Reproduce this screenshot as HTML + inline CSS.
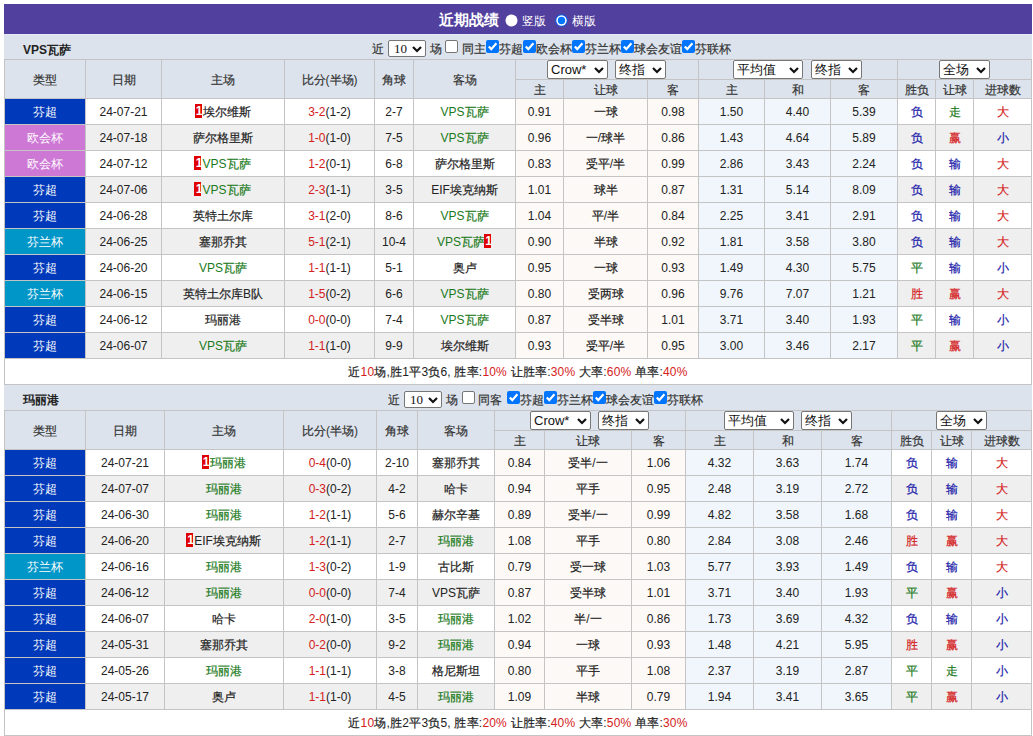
<!DOCTYPE html><html><head><meta charset="utf-8"><style>
html,body{margin:0;padding:0;background:#fff;}
body{width:1033px;height:736px;position:relative;overflow:hidden;font-family:"Liberation Sans",sans-serif;font-size:12px;color:#222;}
div{position:absolute;box-sizing:border-box;}
.t{text-align:center;white-space:nowrap;overflow:visible;}
.c{-webkit-text-stroke:0.2px currentColor}
.g{color:#1b7a1b}
.r{color:#d42020}
b1{color:#1818a8}
g1{color:#1b7a1b}
r1{color:#d42020}
.one{display:inline-block;position:relative;background:#e00000;color:#fff;font-weight:bold;width:7px;height:14px;line-height:14px;vertical-align:top;font-size:12px;margin-top:4px;margin-left:-1px;margin-right:1px}
.one i{font-style:normal;position:absolute;left:-2px;width:13px;text-align:center;top:0}
.sel{background:#fff;border:1px solid #767676;border-radius:2px;color:#111;font-size:13px;padding-left:3px;text-align:left;white-space:nowrap}
.sel.serif{font-family:"Liberation Serif",serif;font-size:13px;padding-left:5px}
.chev{position:absolute;right:3px;top:50%;margin-top:-3px}
.cb{width:13px;height:13px;border:1px solid #767676;border-radius:2px;background:#fff}
.cb.on{background:#0075ff;border:none}
.cb svg{position:absolute;left:0;top:0}
.radio{width:12px;height:12px;border-radius:50%;background:#fff}
.radio.on{border:2px solid #0075ff;background:#fff}
.radio.on div{left:2px;top:2px;width:5px;height:5px;border-radius:50%;background:#0075ff}
</style></head><body><div style="left:4px;top:4px;width:1028px;height:30px;background:#52409e;"></div>
<div style="left:4px;top:34px;width:1028px;height:1px;background:#e6e8fc;"></div>
<div class="t" style="left:439px;top:5px;width:70px;height:30px;line-height:30px;text-align:left;color:#fff;font-weight:bold;font-size:15px">近期战绩</div>
<svg style="position:absolute;left:505px;top:14px" width="13" height="13" viewBox="0 0 13 13"><circle cx="6.5" cy="6.5" r="6" fill="#fff"/></svg>
<div class="t" style="left:522px;top:6px;width:40px;height:30px;line-height:30px;text-align:left;color:#fff">竖版</div>
<svg style="position:absolute;left:555px;top:14px" width="13" height="13" viewBox="0 0 13 13"><circle cx="6.5" cy="6.5" r="6.2" fill="#0a5ae8"/><circle cx="6.5" cy="6.5" r="5.2" fill="#fff"/><circle cx="6.5" cy="6.5" r="3.7" fill="#0075ff"/></svg>
<div class="t" style="left:572px;top:6px;width:40px;height:30px;line-height:30px;text-align:left;color:#fff">横版</div>
<div style="left:4px;top:35px;width:1028px;height:25px;background:#dce3ec;"></div>
<div class="t" style="left:23px;top:38px;width:200px;height:25px;line-height:25px;text-align:left;font-weight:bold;color:#222">VPS瓦萨</div>
<div class="t" style="left:372px;top:37px;width:200px;height:25px;line-height:25px;text-align:left;color:#333"><span class="c">近</span></div>
<div class="sel serif" style="left:388px;top:40px;width:38px;height:17px;line-height:15px;">10<svg class="chev" width="10" height="7" viewBox="0 0 10 7"><path d="M1 1 L5 5 L9 1" fill="none" stroke="#111" stroke-width="2.2"/></svg></div>
<div class="t" style="left:430px;top:37px;width:200px;height:25px;line-height:25px;text-align:left;color:#333"><span class="c">场</span></div>
<div class="cb" style="left:445px;top:40px;"></div>
<div class="t" style="left:462px;top:37px;width:200px;height:25px;line-height:25px;text-align:left;color:#333"><span class="c">同主</span></div>
<div class="cb on" style="left:486px;top:40px;"><svg width="13" height="13" viewBox="0 0 13 13"><path d="M2.8 6.4 L5.3 9.1 L10.4 3.2" fill="none" stroke="#fff" stroke-width="2.2"/></svg></div>
<div class="t" style="left:499px;top:37px;width:200px;height:25px;line-height:25px;text-align:left;color:#333"><span class="c">芬超</span></div>
<div class="cb on" style="left:523px;top:40px;"><svg width="13" height="13" viewBox="0 0 13 13"><path d="M2.8 6.4 L5.3 9.1 L10.4 3.2" fill="none" stroke="#fff" stroke-width="2.2"/></svg></div>
<div class="t" style="left:536px;top:37px;width:200px;height:25px;line-height:25px;text-align:left;color:#333"><span class="c">欧会杯</span></div>
<div class="cb on" style="left:572px;top:40px;"><svg width="13" height="13" viewBox="0 0 13 13"><path d="M2.8 6.4 L5.3 9.1 L10.4 3.2" fill="none" stroke="#fff" stroke-width="2.2"/></svg></div>
<div class="t" style="left:585px;top:37px;width:200px;height:25px;line-height:25px;text-align:left;color:#333"><span class="c">芬兰杯</span></div>
<div class="cb on" style="left:621px;top:40px;"><svg width="13" height="13" viewBox="0 0 13 13"><path d="M2.8 6.4 L5.3 9.1 L10.4 3.2" fill="none" stroke="#fff" stroke-width="2.2"/></svg></div>
<div class="t" style="left:634px;top:37px;width:200px;height:25px;line-height:25px;text-align:left;color:#333"><span class="c">球会友谊</span></div>
<div class="cb on" style="left:682px;top:40px;"><svg width="13" height="13" viewBox="0 0 13 13"><path d="M2.8 6.4 L5.3 9.1 L10.4 3.2" fill="none" stroke="#fff" stroke-width="2.2"/></svg></div>
<div class="t" style="left:695px;top:37px;width:200px;height:25px;line-height:25px;text-align:left;color:#333"><span class="c">芬联杯</span></div>
<div style="left:4px;top:59px;width:1028px;height:39px;background:#dce3ec;"></div>
<div style="left:4px;top:99px;width:1028px;height:25px;background:#ffffff;"></div>
<div style="left:515px;top:99px;width:183px;height:25px;background:#fdf9f6;"></div>
<div style="left:698px;top:99px;width:199px;height:25px;background:#f0f6fb;"></div>
<div style="left:4px;top:99px;width:81px;height:25px;background:#0039ba;"></div>
<div style="left:4px;top:125px;width:1028px;height:25px;background:#efefef;"></div>
<div style="left:515px;top:125px;width:183px;height:25px;background:#fdf9f6;"></div>
<div style="left:698px;top:125px;width:199px;height:25px;background:#f0f6fb;"></div>
<div style="left:4px;top:125px;width:81px;height:25px;background:#ce78d6;"></div>
<div style="left:4px;top:151px;width:1028px;height:25px;background:#ffffff;"></div>
<div style="left:515px;top:151px;width:183px;height:25px;background:#fdf9f6;"></div>
<div style="left:698px;top:151px;width:199px;height:25px;background:#f0f6fb;"></div>
<div style="left:4px;top:151px;width:81px;height:25px;background:#ce78d6;"></div>
<div style="left:4px;top:177px;width:1028px;height:25px;background:#efefef;"></div>
<div style="left:515px;top:177px;width:183px;height:25px;background:#fdf9f6;"></div>
<div style="left:698px;top:177px;width:199px;height:25px;background:#f0f6fb;"></div>
<div style="left:4px;top:177px;width:81px;height:25px;background:#0039ba;"></div>
<div style="left:4px;top:203px;width:1028px;height:25px;background:#ffffff;"></div>
<div style="left:515px;top:203px;width:183px;height:25px;background:#fdf9f6;"></div>
<div style="left:698px;top:203px;width:199px;height:25px;background:#f0f6fb;"></div>
<div style="left:4px;top:203px;width:81px;height:25px;background:#0039ba;"></div>
<div style="left:4px;top:229px;width:1028px;height:25px;background:#efefef;"></div>
<div style="left:515px;top:229px;width:183px;height:25px;background:#fdf9f6;"></div>
<div style="left:698px;top:229px;width:199px;height:25px;background:#f0f6fb;"></div>
<div style="left:4px;top:229px;width:81px;height:25px;background:#0096c8;"></div>
<div style="left:4px;top:255px;width:1028px;height:25px;background:#ffffff;"></div>
<div style="left:515px;top:255px;width:183px;height:25px;background:#fdf9f6;"></div>
<div style="left:698px;top:255px;width:199px;height:25px;background:#f0f6fb;"></div>
<div style="left:4px;top:255px;width:81px;height:25px;background:#0039ba;"></div>
<div style="left:4px;top:281px;width:1028px;height:25px;background:#efefef;"></div>
<div style="left:515px;top:281px;width:183px;height:25px;background:#fdf9f6;"></div>
<div style="left:698px;top:281px;width:199px;height:25px;background:#f0f6fb;"></div>
<div style="left:4px;top:281px;width:81px;height:25px;background:#0096c8;"></div>
<div style="left:4px;top:307px;width:1028px;height:25px;background:#ffffff;"></div>
<div style="left:515px;top:307px;width:183px;height:25px;background:#fdf9f6;"></div>
<div style="left:698px;top:307px;width:199px;height:25px;background:#f0f6fb;"></div>
<div style="left:4px;top:307px;width:81px;height:25px;background:#0039ba;"></div>
<div style="left:4px;top:333px;width:1028px;height:25px;background:#efefef;"></div>
<div style="left:515px;top:333px;width:183px;height:25px;background:#fdf9f6;"></div>
<div style="left:698px;top:333px;width:199px;height:25px;background:#f0f6fb;"></div>
<div style="left:4px;top:333px;width:81px;height:25px;background:#0039ba;"></div>
<div style="left:4px;top:359px;width:1028px;height:25px;background:#ffffff;"></div>
<div style="left:4px;top:59px;width:1028px;height:1px;background:#c4c4c4;"></div>
<div style="left:515px;top:79px;width:516px;height:1px;background:#c4c4c4;"></div>
<div style="left:4px;top:98px;width:1028px;height:1px;background:#c4c4c4;"></div>
<div style="left:4px;top:124px;width:1028px;height:1px;background:#c4c4c4;"></div>
<div style="left:4px;top:150px;width:1028px;height:1px;background:#c4c4c4;"></div>
<div style="left:4px;top:176px;width:1028px;height:1px;background:#c4c4c4;"></div>
<div style="left:4px;top:202px;width:1028px;height:1px;background:#c4c4c4;"></div>
<div style="left:4px;top:228px;width:1028px;height:1px;background:#c4c4c4;"></div>
<div style="left:4px;top:254px;width:1028px;height:1px;background:#c4c4c4;"></div>
<div style="left:4px;top:280px;width:1028px;height:1px;background:#c4c4c4;"></div>
<div style="left:4px;top:306px;width:1028px;height:1px;background:#c4c4c4;"></div>
<div style="left:4px;top:332px;width:1028px;height:1px;background:#c4c4c4;"></div>
<div style="left:4px;top:358px;width:1028px;height:1px;background:#c4c4c4;"></div>
<div style="left:4px;top:384px;width:1028px;height:1px;background:#c4c4c4;"></div>
<div style="left:4px;top:59px;width:1px;height:326px;background:#c4c4c4;"></div>
<div style="left:85px;top:59px;width:1px;height:299px;background:#c4c4c4;"></div>
<div style="left:161px;top:59px;width:1px;height:299px;background:#c4c4c4;"></div>
<div style="left:284px;top:59px;width:1px;height:299px;background:#c4c4c4;"></div>
<div style="left:374px;top:59px;width:1px;height:299px;background:#c4c4c4;"></div>
<div style="left:413px;top:59px;width:1px;height:299px;background:#c4c4c4;"></div>
<div style="left:515px;top:59px;width:1px;height:299px;background:#c4c4c4;"></div>
<div style="left:563px;top:79px;width:1px;height:279px;background:#c4c4c4;"></div>
<div style="left:647px;top:79px;width:1px;height:279px;background:#c4c4c4;"></div>
<div style="left:698px;top:59px;width:1px;height:299px;background:#c4c4c4;"></div>
<div style="left:764px;top:79px;width:1px;height:279px;background:#c4c4c4;"></div>
<div style="left:830px;top:79px;width:1px;height:279px;background:#c4c4c4;"></div>
<div style="left:897px;top:59px;width:1px;height:299px;background:#c4c4c4;"></div>
<div style="left:935px;top:79px;width:1px;height:279px;background:#c4c4c4;"></div>
<div style="left:973px;top:79px;width:1px;height:279px;background:#c4c4c4;"></div>
<div style="left:1031px;top:59px;width:1px;height:326px;background:#c4c4c4;"></div>
<div class="t" style="left:5px;top:61px;width:80px;height:38px;line-height:38px;color:#333"><span class="c">类型</span></div>
<div class="t" style="left:86px;top:61px;width:75px;height:38px;line-height:38px;color:#333"><span class="c">日期</span></div>
<div class="t" style="left:162px;top:61px;width:122px;height:38px;line-height:38px;color:#333"><span class="c">主场</span></div>
<div class="t" style="left:285px;top:61px;width:89px;height:38px;line-height:38px;color:#333"><span class="c">比分</span>(<span class="c">半场</span>)</div>
<div class="t" style="left:375px;top:61px;width:38px;height:38px;line-height:38px;color:#333"><span class="c">角球</span></div>
<div class="t" style="left:414px;top:61px;width:101px;height:38px;line-height:38px;color:#333"><span class="c">客场</span></div>
<div class="t" style="left:516px;top:81px;width:47px;height:18px;line-height:18px;color:#333"><span class="c">主</span></div>
<div class="t" style="left:564px;top:81px;width:83px;height:18px;line-height:18px;color:#333"><span class="c">让球</span></div>
<div class="t" style="left:648px;top:81px;width:50px;height:18px;line-height:18px;color:#333"><span class="c">客</span></div>
<div class="t" style="left:699px;top:81px;width:65px;height:18px;line-height:18px;color:#333"><span class="c">主</span></div>
<div class="t" style="left:765px;top:81px;width:65px;height:18px;line-height:18px;color:#333"><span class="c">和</span></div>
<div class="t" style="left:831px;top:81px;width:66px;height:18px;line-height:18px;color:#333"><span class="c">客</span></div>
<div class="t" style="left:898px;top:81px;width:37px;height:18px;line-height:18px;color:#333"><span class="c">胜负</span></div>
<div class="t" style="left:936px;top:81px;width:37px;height:18px;line-height:18px;color:#333"><span class="c">让球</span></div>
<div class="t" style="left:974px;top:81px;width:57px;height:18px;line-height:18px;color:#333"><span class="c">进球数</span></div>
<div class="sel" style="left:547px;top:60px;width:61px;height:19px;line-height:17px;">Crow*<svg class="chev" width="10" height="7" viewBox="0 0 10 7"><path d="M1 1 L5 5 L9 1" fill="none" stroke="#111" stroke-width="2.2"/></svg></div>
<div class="sel" style="left:615px;top:60px;width:51px;height:19px;line-height:17px;">终指<svg class="chev" width="10" height="7" viewBox="0 0 10 7"><path d="M1 1 L5 5 L9 1" fill="none" stroke="#111" stroke-width="2.2"/></svg></div>
<div class="sel" style="left:733px;top:60px;width:70px;height:19px;line-height:17px;">平均值<svg class="chev" width="10" height="7" viewBox="0 0 10 7"><path d="M1 1 L5 5 L9 1" fill="none" stroke="#111" stroke-width="2.2"/></svg></div>
<div class="sel" style="left:811px;top:60px;width:51px;height:19px;line-height:17px;">终指<svg class="chev" width="10" height="7" viewBox="0 0 10 7"><path d="M1 1 L5 5 L9 1" fill="none" stroke="#111" stroke-width="2.2"/></svg></div>
<div class="sel" style="left:939px;top:60px;width:51px;height:19px;line-height:17px;">全场<svg class="chev" width="10" height="7" viewBox="0 0 10 7"><path d="M1 1 L5 5 L9 1" fill="none" stroke="#111" stroke-width="2.2"/></svg></div>
<div class="t" style="left:5px;top:100px;width:80px;height:25px;line-height:25px;color:#fff">芬超</div>
<div class="t" style="left:86px;top:100px;width:75px;height:25px;line-height:25px;">24-07-21</div>
<div class="t" style="left:162px;top:100px;width:122px;height:25px;line-height:25px;"><span class="one"><i>1</i></span><span class="c">埃尔维斯</span></div>
<div class="t" style="left:285px;top:100px;width:89px;height:25px;line-height:25px;"><span class="r">3-2</span>(1-2)</div>
<div class="t" style="left:375px;top:100px;width:38px;height:25px;line-height:25px;">2-7</div>
<div class="t" style="left:414px;top:100px;width:101px;height:25px;line-height:25px;"><span class="g">VPS<span class="c">瓦萨</span></span></div>
<div class="t" style="left:516px;top:100px;width:47px;height:25px;line-height:25px;">0.91</div>
<div class="t" style="left:564px;top:100px;width:83px;height:25px;line-height:25px;"><span class="c">一球</span></div>
<div class="t" style="left:648px;top:100px;width:50px;height:25px;line-height:25px;">0.98</div>
<div class="t" style="left:699px;top:100px;width:65px;height:25px;line-height:25px;">1.50</div>
<div class="t" style="left:765px;top:100px;width:65px;height:25px;line-height:25px;">4.40</div>
<div class="t" style="left:831px;top:100px;width:66px;height:25px;line-height:25px;">5.39</div>
<div class="t" style="left:898px;top:100px;width:37px;height:25px;line-height:25px;"><b1><span class="c">负</span></b1></div>
<div class="t" style="left:936px;top:100px;width:37px;height:25px;line-height:25px;"><g1><span class="c">走</span></g1></div>
<div class="t" style="left:974px;top:100px;width:57px;height:25px;line-height:25px;"><r1><span class="c">大</span></r1></div>
<div class="t" style="left:5px;top:126px;width:80px;height:25px;line-height:25px;color:#fff">欧会杯</div>
<div class="t" style="left:86px;top:126px;width:75px;height:25px;line-height:25px;">24-07-18</div>
<div class="t" style="left:162px;top:126px;width:122px;height:25px;line-height:25px;"><span class="c">萨尔格里斯</span></div>
<div class="t" style="left:285px;top:126px;width:89px;height:25px;line-height:25px;"><span class="r">1-0</span>(1-0)</div>
<div class="t" style="left:375px;top:126px;width:38px;height:25px;line-height:25px;">7-5</div>
<div class="t" style="left:414px;top:126px;width:101px;height:25px;line-height:25px;"><span class="g">VPS<span class="c">瓦萨</span></span></div>
<div class="t" style="left:516px;top:126px;width:47px;height:25px;line-height:25px;">0.96</div>
<div class="t" style="left:564px;top:126px;width:83px;height:25px;line-height:25px;"><span class="c">一</span>/<span class="c">球半</span></div>
<div class="t" style="left:648px;top:126px;width:50px;height:25px;line-height:25px;">0.86</div>
<div class="t" style="left:699px;top:126px;width:65px;height:25px;line-height:25px;">1.43</div>
<div class="t" style="left:765px;top:126px;width:65px;height:25px;line-height:25px;">4.64</div>
<div class="t" style="left:831px;top:126px;width:66px;height:25px;line-height:25px;">5.89</div>
<div class="t" style="left:898px;top:126px;width:37px;height:25px;line-height:25px;"><b1><span class="c">负</span></b1></div>
<div class="t" style="left:936px;top:126px;width:37px;height:25px;line-height:25px;"><r1><span class="c">赢</span></r1></div>
<div class="t" style="left:974px;top:126px;width:57px;height:25px;line-height:25px;"><b1><span class="c">小</span></b1></div>
<div class="t" style="left:5px;top:152px;width:80px;height:25px;line-height:25px;color:#fff">欧会杯</div>
<div class="t" style="left:86px;top:152px;width:75px;height:25px;line-height:25px;">24-07-12</div>
<div class="t" style="left:162px;top:152px;width:122px;height:25px;line-height:25px;"><span class="one"><i>1</i></span><span class="g">VPS<span class="c">瓦萨</span></span></div>
<div class="t" style="left:285px;top:152px;width:89px;height:25px;line-height:25px;"><span class="r">1-2</span>(0-1)</div>
<div class="t" style="left:375px;top:152px;width:38px;height:25px;line-height:25px;">6-8</div>
<div class="t" style="left:414px;top:152px;width:101px;height:25px;line-height:25px;"><span class="c">萨尔格里斯</span></div>
<div class="t" style="left:516px;top:152px;width:47px;height:25px;line-height:25px;">0.83</div>
<div class="t" style="left:564px;top:152px;width:83px;height:25px;line-height:25px;"><span class="c">受平</span>/<span class="c">半</span></div>
<div class="t" style="left:648px;top:152px;width:50px;height:25px;line-height:25px;">0.99</div>
<div class="t" style="left:699px;top:152px;width:65px;height:25px;line-height:25px;">2.86</div>
<div class="t" style="left:765px;top:152px;width:65px;height:25px;line-height:25px;">3.43</div>
<div class="t" style="left:831px;top:152px;width:66px;height:25px;line-height:25px;">2.24</div>
<div class="t" style="left:898px;top:152px;width:37px;height:25px;line-height:25px;"><b1><span class="c">负</span></b1></div>
<div class="t" style="left:936px;top:152px;width:37px;height:25px;line-height:25px;"><b1><span class="c">输</span></b1></div>
<div class="t" style="left:974px;top:152px;width:57px;height:25px;line-height:25px;"><r1><span class="c">大</span></r1></div>
<div class="t" style="left:5px;top:178px;width:80px;height:25px;line-height:25px;color:#fff">芬超</div>
<div class="t" style="left:86px;top:178px;width:75px;height:25px;line-height:25px;">24-07-06</div>
<div class="t" style="left:162px;top:178px;width:122px;height:25px;line-height:25px;"><span class="one"><i>1</i></span><span class="g">VPS<span class="c">瓦萨</span></span></div>
<div class="t" style="left:285px;top:178px;width:89px;height:25px;line-height:25px;"><span class="r">2-3</span>(1-1)</div>
<div class="t" style="left:375px;top:178px;width:38px;height:25px;line-height:25px;">3-5</div>
<div class="t" style="left:414px;top:178px;width:101px;height:25px;line-height:25px;">EIF<span class="c">埃克纳斯</span></div>
<div class="t" style="left:516px;top:178px;width:47px;height:25px;line-height:25px;">1.01</div>
<div class="t" style="left:564px;top:178px;width:83px;height:25px;line-height:25px;"><span class="c">球半</span></div>
<div class="t" style="left:648px;top:178px;width:50px;height:25px;line-height:25px;">0.87</div>
<div class="t" style="left:699px;top:178px;width:65px;height:25px;line-height:25px;">1.31</div>
<div class="t" style="left:765px;top:178px;width:65px;height:25px;line-height:25px;">5.14</div>
<div class="t" style="left:831px;top:178px;width:66px;height:25px;line-height:25px;">8.09</div>
<div class="t" style="left:898px;top:178px;width:37px;height:25px;line-height:25px;"><b1><span class="c">负</span></b1></div>
<div class="t" style="left:936px;top:178px;width:37px;height:25px;line-height:25px;"><b1><span class="c">输</span></b1></div>
<div class="t" style="left:974px;top:178px;width:57px;height:25px;line-height:25px;"><r1><span class="c">大</span></r1></div>
<div class="t" style="left:5px;top:204px;width:80px;height:25px;line-height:25px;color:#fff">芬超</div>
<div class="t" style="left:86px;top:204px;width:75px;height:25px;line-height:25px;">24-06-28</div>
<div class="t" style="left:162px;top:204px;width:122px;height:25px;line-height:25px;"><span class="c">英特土尔库</span></div>
<div class="t" style="left:285px;top:204px;width:89px;height:25px;line-height:25px;"><span class="r">3-1</span>(2-0)</div>
<div class="t" style="left:375px;top:204px;width:38px;height:25px;line-height:25px;">8-6</div>
<div class="t" style="left:414px;top:204px;width:101px;height:25px;line-height:25px;"><span class="g">VPS<span class="c">瓦萨</span></span></div>
<div class="t" style="left:516px;top:204px;width:47px;height:25px;line-height:25px;">1.04</div>
<div class="t" style="left:564px;top:204px;width:83px;height:25px;line-height:25px;"><span class="c">平</span>/<span class="c">半</span></div>
<div class="t" style="left:648px;top:204px;width:50px;height:25px;line-height:25px;">0.84</div>
<div class="t" style="left:699px;top:204px;width:65px;height:25px;line-height:25px;">2.25</div>
<div class="t" style="left:765px;top:204px;width:65px;height:25px;line-height:25px;">3.41</div>
<div class="t" style="left:831px;top:204px;width:66px;height:25px;line-height:25px;">2.91</div>
<div class="t" style="left:898px;top:204px;width:37px;height:25px;line-height:25px;"><b1><span class="c">负</span></b1></div>
<div class="t" style="left:936px;top:204px;width:37px;height:25px;line-height:25px;"><b1><span class="c">输</span></b1></div>
<div class="t" style="left:974px;top:204px;width:57px;height:25px;line-height:25px;"><r1><span class="c">大</span></r1></div>
<div class="t" style="left:5px;top:230px;width:80px;height:25px;line-height:25px;color:#fff">芬兰杯</div>
<div class="t" style="left:86px;top:230px;width:75px;height:25px;line-height:25px;">24-06-25</div>
<div class="t" style="left:162px;top:230px;width:122px;height:25px;line-height:25px;"><span class="c">塞那乔其</span></div>
<div class="t" style="left:285px;top:230px;width:89px;height:25px;line-height:25px;"><span class="r">5-1</span>(2-1)</div>
<div class="t" style="left:375px;top:230px;width:38px;height:25px;line-height:25px;">10-4</div>
<div class="t" style="left:414px;top:230px;width:101px;height:25px;line-height:25px;"><span class="g">VPS<span class="c">瓦萨</span></span><span class="one"><i>1</i></span></div>
<div class="t" style="left:516px;top:230px;width:47px;height:25px;line-height:25px;">0.90</div>
<div class="t" style="left:564px;top:230px;width:83px;height:25px;line-height:25px;"><span class="c">半球</span></div>
<div class="t" style="left:648px;top:230px;width:50px;height:25px;line-height:25px;">0.92</div>
<div class="t" style="left:699px;top:230px;width:65px;height:25px;line-height:25px;">1.81</div>
<div class="t" style="left:765px;top:230px;width:65px;height:25px;line-height:25px;">3.58</div>
<div class="t" style="left:831px;top:230px;width:66px;height:25px;line-height:25px;">3.80</div>
<div class="t" style="left:898px;top:230px;width:37px;height:25px;line-height:25px;"><b1><span class="c">负</span></b1></div>
<div class="t" style="left:936px;top:230px;width:37px;height:25px;line-height:25px;"><b1><span class="c">输</span></b1></div>
<div class="t" style="left:974px;top:230px;width:57px;height:25px;line-height:25px;"><r1><span class="c">大</span></r1></div>
<div class="t" style="left:5px;top:256px;width:80px;height:25px;line-height:25px;color:#fff">芬超</div>
<div class="t" style="left:86px;top:256px;width:75px;height:25px;line-height:25px;">24-06-20</div>
<div class="t" style="left:162px;top:256px;width:122px;height:25px;line-height:25px;"><span class="g">VPS<span class="c">瓦萨</span></span></div>
<div class="t" style="left:285px;top:256px;width:89px;height:25px;line-height:25px;"><span class="r">1-1</span>(1-1)</div>
<div class="t" style="left:375px;top:256px;width:38px;height:25px;line-height:25px;">5-1</div>
<div class="t" style="left:414px;top:256px;width:101px;height:25px;line-height:25px;"><span class="c">奥卢</span></div>
<div class="t" style="left:516px;top:256px;width:47px;height:25px;line-height:25px;">0.95</div>
<div class="t" style="left:564px;top:256px;width:83px;height:25px;line-height:25px;"><span class="c">一球</span></div>
<div class="t" style="left:648px;top:256px;width:50px;height:25px;line-height:25px;">0.93</div>
<div class="t" style="left:699px;top:256px;width:65px;height:25px;line-height:25px;">1.49</div>
<div class="t" style="left:765px;top:256px;width:65px;height:25px;line-height:25px;">4.30</div>
<div class="t" style="left:831px;top:256px;width:66px;height:25px;line-height:25px;">5.75</div>
<div class="t" style="left:898px;top:256px;width:37px;height:25px;line-height:25px;"><g1><span class="c">平</span></g1></div>
<div class="t" style="left:936px;top:256px;width:37px;height:25px;line-height:25px;"><b1><span class="c">输</span></b1></div>
<div class="t" style="left:974px;top:256px;width:57px;height:25px;line-height:25px;"><b1><span class="c">小</span></b1></div>
<div class="t" style="left:5px;top:282px;width:80px;height:25px;line-height:25px;color:#fff">芬兰杯</div>
<div class="t" style="left:86px;top:282px;width:75px;height:25px;line-height:25px;">24-06-15</div>
<div class="t" style="left:162px;top:282px;width:122px;height:25px;line-height:25px;"><span class="c">英特土尔库</span>B<span class="c">队</span></div>
<div class="t" style="left:285px;top:282px;width:89px;height:25px;line-height:25px;"><span class="r">1-5</span>(0-2)</div>
<div class="t" style="left:375px;top:282px;width:38px;height:25px;line-height:25px;">6-6</div>
<div class="t" style="left:414px;top:282px;width:101px;height:25px;line-height:25px;"><span class="g">VPS<span class="c">瓦萨</span></span></div>
<div class="t" style="left:516px;top:282px;width:47px;height:25px;line-height:25px;">0.80</div>
<div class="t" style="left:564px;top:282px;width:83px;height:25px;line-height:25px;"><span class="c">受两球</span></div>
<div class="t" style="left:648px;top:282px;width:50px;height:25px;line-height:25px;">0.96</div>
<div class="t" style="left:699px;top:282px;width:65px;height:25px;line-height:25px;">9.76</div>
<div class="t" style="left:765px;top:282px;width:65px;height:25px;line-height:25px;">7.07</div>
<div class="t" style="left:831px;top:282px;width:66px;height:25px;line-height:25px;">1.21</div>
<div class="t" style="left:898px;top:282px;width:37px;height:25px;line-height:25px;"><r1><span class="c">胜</span></r1></div>
<div class="t" style="left:936px;top:282px;width:37px;height:25px;line-height:25px;"><r1><span class="c">赢</span></r1></div>
<div class="t" style="left:974px;top:282px;width:57px;height:25px;line-height:25px;"><r1><span class="c">大</span></r1></div>
<div class="t" style="left:5px;top:308px;width:80px;height:25px;line-height:25px;color:#fff">芬超</div>
<div class="t" style="left:86px;top:308px;width:75px;height:25px;line-height:25px;">24-06-12</div>
<div class="t" style="left:162px;top:308px;width:122px;height:25px;line-height:25px;"><span class="c">玛丽港</span></div>
<div class="t" style="left:285px;top:308px;width:89px;height:25px;line-height:25px;"><span class="r">0-0</span>(0-0)</div>
<div class="t" style="left:375px;top:308px;width:38px;height:25px;line-height:25px;">7-4</div>
<div class="t" style="left:414px;top:308px;width:101px;height:25px;line-height:25px;"><span class="g">VPS<span class="c">瓦萨</span></span></div>
<div class="t" style="left:516px;top:308px;width:47px;height:25px;line-height:25px;">0.87</div>
<div class="t" style="left:564px;top:308px;width:83px;height:25px;line-height:25px;"><span class="c">受半球</span></div>
<div class="t" style="left:648px;top:308px;width:50px;height:25px;line-height:25px;">1.01</div>
<div class="t" style="left:699px;top:308px;width:65px;height:25px;line-height:25px;">3.71</div>
<div class="t" style="left:765px;top:308px;width:65px;height:25px;line-height:25px;">3.40</div>
<div class="t" style="left:831px;top:308px;width:66px;height:25px;line-height:25px;">1.93</div>
<div class="t" style="left:898px;top:308px;width:37px;height:25px;line-height:25px;"><g1><span class="c">平</span></g1></div>
<div class="t" style="left:936px;top:308px;width:37px;height:25px;line-height:25px;"><b1><span class="c">输</span></b1></div>
<div class="t" style="left:974px;top:308px;width:57px;height:25px;line-height:25px;"><b1><span class="c">小</span></b1></div>
<div class="t" style="left:5px;top:334px;width:80px;height:25px;line-height:25px;color:#fff">芬超</div>
<div class="t" style="left:86px;top:334px;width:75px;height:25px;line-height:25px;">24-06-07</div>
<div class="t" style="left:162px;top:334px;width:122px;height:25px;line-height:25px;"><span class="g">VPS<span class="c">瓦萨</span></span></div>
<div class="t" style="left:285px;top:334px;width:89px;height:25px;line-height:25px;"><span class="r">1-1</span>(1-0)</div>
<div class="t" style="left:375px;top:334px;width:38px;height:25px;line-height:25px;">9-9</div>
<div class="t" style="left:414px;top:334px;width:101px;height:25px;line-height:25px;"><span class="c">埃尔维斯</span></div>
<div class="t" style="left:516px;top:334px;width:47px;height:25px;line-height:25px;">0.93</div>
<div class="t" style="left:564px;top:334px;width:83px;height:25px;line-height:25px;"><span class="c">受平</span>/<span class="c">半</span></div>
<div class="t" style="left:648px;top:334px;width:50px;height:25px;line-height:25px;">0.95</div>
<div class="t" style="left:699px;top:334px;width:65px;height:25px;line-height:25px;">3.00</div>
<div class="t" style="left:765px;top:334px;width:65px;height:25px;line-height:25px;">3.46</div>
<div class="t" style="left:831px;top:334px;width:66px;height:25px;line-height:25px;">2.17</div>
<div class="t" style="left:898px;top:334px;width:37px;height:25px;line-height:25px;"><g1><span class="c">平</span></g1></div>
<div class="t" style="left:936px;top:334px;width:37px;height:25px;line-height:25px;"><r1><span class="c">赢</span></r1></div>
<div class="t" style="left:974px;top:334px;width:57px;height:25px;line-height:25px;"><b1><span class="c">小</span></b1></div>
<div class="t" style="left:5px;top:360px;width:1026px;height:25px;line-height:25px;letter-spacing:0.2px"><span class="c">近</span><span class="r">10</span><span class="c">场</span>,<span class="c">胜</span>1<span class="c">平</span>3<span class="c">负</span>6, <span class="c">胜率</span>:<span class="r">10%</span> <span class="c">让胜率</span>:<span class="r">30%</span> <span class="c">大率</span>:<span class="r">60%</span> <span class="c">单率</span>:<span class="r">40%</span></div>
<div style="left:4px;top:385px;width:1028px;height:25px;background:#dce3ec;"></div>
<div class="t" style="left:23px;top:388px;width:200px;height:25px;line-height:25px;text-align:left;font-weight:bold;color:#222">玛丽港</div>
<div class="t" style="left:388px;top:388px;width:200px;height:25px;line-height:25px;text-align:left;color:#333"><span class="c">近</span></div>
<div class="sel serif" style="left:404px;top:391px;width:38px;height:17px;line-height:15px;">10<svg class="chev" width="10" height="7" viewBox="0 0 10 7"><path d="M1 1 L5 5 L9 1" fill="none" stroke="#111" stroke-width="2.2"/></svg></div>
<div class="t" style="left:446px;top:388px;width:200px;height:25px;line-height:25px;text-align:left;color:#333"><span class="c">场</span></div>
<div class="cb" style="left:462px;top:391px;"></div>
<div class="t" style="left:478px;top:388px;width:200px;height:25px;line-height:25px;text-align:left;color:#333"><span class="c">同客</span></div>
<div class="cb on" style="left:507px;top:391px;"><svg width="13" height="13" viewBox="0 0 13 13"><path d="M2.8 6.4 L5.3 9.1 L10.4 3.2" fill="none" stroke="#fff" stroke-width="2.2"/></svg></div>
<div class="t" style="left:520px;top:388px;width:200px;height:25px;line-height:25px;text-align:left;color:#333"><span class="c">芬超</span></div>
<div class="cb on" style="left:544px;top:391px;"><svg width="13" height="13" viewBox="0 0 13 13"><path d="M2.8 6.4 L5.3 9.1 L10.4 3.2" fill="none" stroke="#fff" stroke-width="2.2"/></svg></div>
<div class="t" style="left:557px;top:388px;width:200px;height:25px;line-height:25px;text-align:left;color:#333"><span class="c">芬兰杯</span></div>
<div class="cb on" style="left:593px;top:391px;"><svg width="13" height="13" viewBox="0 0 13 13"><path d="M2.8 6.4 L5.3 9.1 L10.4 3.2" fill="none" stroke="#fff" stroke-width="2.2"/></svg></div>
<div class="t" style="left:606px;top:388px;width:200px;height:25px;line-height:25px;text-align:left;color:#333"><span class="c">球会友谊</span></div>
<div class="cb on" style="left:654px;top:391px;"><svg width="13" height="13" viewBox="0 0 13 13"><path d="M2.8 6.4 L5.3 9.1 L10.4 3.2" fill="none" stroke="#fff" stroke-width="2.2"/></svg></div>
<div class="t" style="left:667px;top:388px;width:200px;height:25px;line-height:25px;text-align:left;color:#333"><span class="c">芬联杯</span></div>
<div style="left:4px;top:410px;width:1028px;height:39px;background:#dce3ec;"></div>
<div style="left:4px;top:450px;width:1028px;height:25px;background:#ffffff;"></div>
<div style="left:494px;top:450px;width:191px;height:25px;background:#fdf9f6;"></div>
<div style="left:685px;top:450px;width:206px;height:25px;background:#f0f6fb;"></div>
<div style="left:4px;top:450px;width:81px;height:25px;background:#0039ba;"></div>
<div style="left:4px;top:476px;width:1028px;height:25px;background:#efefef;"></div>
<div style="left:494px;top:476px;width:191px;height:25px;background:#fdf9f6;"></div>
<div style="left:685px;top:476px;width:206px;height:25px;background:#f0f6fb;"></div>
<div style="left:4px;top:476px;width:81px;height:25px;background:#0039ba;"></div>
<div style="left:4px;top:502px;width:1028px;height:25px;background:#ffffff;"></div>
<div style="left:494px;top:502px;width:191px;height:25px;background:#fdf9f6;"></div>
<div style="left:685px;top:502px;width:206px;height:25px;background:#f0f6fb;"></div>
<div style="left:4px;top:502px;width:81px;height:25px;background:#0039ba;"></div>
<div style="left:4px;top:528px;width:1028px;height:25px;background:#efefef;"></div>
<div style="left:494px;top:528px;width:191px;height:25px;background:#fdf9f6;"></div>
<div style="left:685px;top:528px;width:206px;height:25px;background:#f0f6fb;"></div>
<div style="left:4px;top:528px;width:81px;height:25px;background:#0039ba;"></div>
<div style="left:4px;top:554px;width:1028px;height:25px;background:#ffffff;"></div>
<div style="left:494px;top:554px;width:191px;height:25px;background:#fdf9f6;"></div>
<div style="left:685px;top:554px;width:206px;height:25px;background:#f0f6fb;"></div>
<div style="left:4px;top:554px;width:81px;height:25px;background:#0096c8;"></div>
<div style="left:4px;top:580px;width:1028px;height:25px;background:#efefef;"></div>
<div style="left:494px;top:580px;width:191px;height:25px;background:#fdf9f6;"></div>
<div style="left:685px;top:580px;width:206px;height:25px;background:#f0f6fb;"></div>
<div style="left:4px;top:580px;width:81px;height:25px;background:#0039ba;"></div>
<div style="left:4px;top:606px;width:1028px;height:25px;background:#ffffff;"></div>
<div style="left:494px;top:606px;width:191px;height:25px;background:#fdf9f6;"></div>
<div style="left:685px;top:606px;width:206px;height:25px;background:#f0f6fb;"></div>
<div style="left:4px;top:606px;width:81px;height:25px;background:#0039ba;"></div>
<div style="left:4px;top:632px;width:1028px;height:25px;background:#efefef;"></div>
<div style="left:494px;top:632px;width:191px;height:25px;background:#fdf9f6;"></div>
<div style="left:685px;top:632px;width:206px;height:25px;background:#f0f6fb;"></div>
<div style="left:4px;top:632px;width:81px;height:25px;background:#0039ba;"></div>
<div style="left:4px;top:658px;width:1028px;height:25px;background:#ffffff;"></div>
<div style="left:494px;top:658px;width:191px;height:25px;background:#fdf9f6;"></div>
<div style="left:685px;top:658px;width:206px;height:25px;background:#f0f6fb;"></div>
<div style="left:4px;top:658px;width:81px;height:25px;background:#0039ba;"></div>
<div style="left:4px;top:684px;width:1028px;height:25px;background:#efefef;"></div>
<div style="left:494px;top:684px;width:191px;height:25px;background:#fdf9f6;"></div>
<div style="left:685px;top:684px;width:206px;height:25px;background:#f0f6fb;"></div>
<div style="left:4px;top:684px;width:81px;height:25px;background:#0039ba;"></div>
<div style="left:4px;top:710px;width:1028px;height:25px;background:#ffffff;"></div>
<div style="left:4px;top:410px;width:1028px;height:1px;background:#c4c4c4;"></div>
<div style="left:494px;top:430px;width:537px;height:1px;background:#c4c4c4;"></div>
<div style="left:4px;top:449px;width:1028px;height:1px;background:#c4c4c4;"></div>
<div style="left:4px;top:475px;width:1028px;height:1px;background:#c4c4c4;"></div>
<div style="left:4px;top:501px;width:1028px;height:1px;background:#c4c4c4;"></div>
<div style="left:4px;top:527px;width:1028px;height:1px;background:#c4c4c4;"></div>
<div style="left:4px;top:553px;width:1028px;height:1px;background:#c4c4c4;"></div>
<div style="left:4px;top:579px;width:1028px;height:1px;background:#c4c4c4;"></div>
<div style="left:4px;top:605px;width:1028px;height:1px;background:#c4c4c4;"></div>
<div style="left:4px;top:631px;width:1028px;height:1px;background:#c4c4c4;"></div>
<div style="left:4px;top:657px;width:1028px;height:1px;background:#c4c4c4;"></div>
<div style="left:4px;top:683px;width:1028px;height:1px;background:#c4c4c4;"></div>
<div style="left:4px;top:709px;width:1028px;height:1px;background:#c4c4c4;"></div>
<div style="left:4px;top:735px;width:1028px;height:1px;background:#c4c4c4;"></div>
<div style="left:4px;top:410px;width:1px;height:326px;background:#c4c4c4;"></div>
<div style="left:85px;top:410px;width:1px;height:299px;background:#c4c4c4;"></div>
<div style="left:164px;top:410px;width:1px;height:299px;background:#c4c4c4;"></div>
<div style="left:283px;top:410px;width:1px;height:299px;background:#c4c4c4;"></div>
<div style="left:376px;top:410px;width:1px;height:299px;background:#c4c4c4;"></div>
<div style="left:417px;top:410px;width:1px;height:299px;background:#c4c4c4;"></div>
<div style="left:494px;top:410px;width:1px;height:299px;background:#c4c4c4;"></div>
<div style="left:544px;top:430px;width:1px;height:279px;background:#c4c4c4;"></div>
<div style="left:631px;top:430px;width:1px;height:279px;background:#c4c4c4;"></div>
<div style="left:685px;top:410px;width:1px;height:299px;background:#c4c4c4;"></div>
<div style="left:753px;top:430px;width:1px;height:279px;background:#c4c4c4;"></div>
<div style="left:821px;top:430px;width:1px;height:279px;background:#c4c4c4;"></div>
<div style="left:891px;top:410px;width:1px;height:299px;background:#c4c4c4;"></div>
<div style="left:931px;top:430px;width:1px;height:279px;background:#c4c4c4;"></div>
<div style="left:971px;top:430px;width:1px;height:279px;background:#c4c4c4;"></div>
<div style="left:1031px;top:410px;width:1px;height:326px;background:#c4c4c4;"></div>
<div class="t" style="left:5px;top:412px;width:80px;height:38px;line-height:38px;color:#333"><span class="c">类型</span></div>
<div class="t" style="left:86px;top:412px;width:78px;height:38px;line-height:38px;color:#333"><span class="c">日期</span></div>
<div class="t" style="left:165px;top:412px;width:118px;height:38px;line-height:38px;color:#333"><span class="c">主场</span></div>
<div class="t" style="left:284px;top:412px;width:92px;height:38px;line-height:38px;color:#333"><span class="c">比分</span>(<span class="c">半场</span>)</div>
<div class="t" style="left:377px;top:412px;width:40px;height:38px;line-height:38px;color:#333"><span class="c">角球</span></div>
<div class="t" style="left:418px;top:412px;width:76px;height:38px;line-height:38px;color:#333"><span class="c">客场</span></div>
<div class="t" style="left:495px;top:432px;width:49px;height:18px;line-height:18px;color:#333"><span class="c">主</span></div>
<div class="t" style="left:545px;top:432px;width:86px;height:18px;line-height:18px;color:#333"><span class="c">让球</span></div>
<div class="t" style="left:632px;top:432px;width:53px;height:18px;line-height:18px;color:#333"><span class="c">客</span></div>
<div class="t" style="left:686px;top:432px;width:67px;height:18px;line-height:18px;color:#333"><span class="c">主</span></div>
<div class="t" style="left:754px;top:432px;width:67px;height:18px;line-height:18px;color:#333"><span class="c">和</span></div>
<div class="t" style="left:822px;top:432px;width:69px;height:18px;line-height:18px;color:#333"><span class="c">客</span></div>
<div class="t" style="left:892px;top:432px;width:39px;height:18px;line-height:18px;color:#333"><span class="c">胜负</span></div>
<div class="t" style="left:932px;top:432px;width:39px;height:18px;line-height:18px;color:#333"><span class="c">让球</span></div>
<div class="t" style="left:972px;top:432px;width:59px;height:18px;line-height:18px;color:#333"><span class="c">进球数</span></div>
<div class="sel" style="left:530px;top:411px;width:61px;height:19px;line-height:17px;">Crow*<svg class="chev" width="10" height="7" viewBox="0 0 10 7"><path d="M1 1 L5 5 L9 1" fill="none" stroke="#111" stroke-width="2.2"/></svg></div>
<div class="sel" style="left:598px;top:411px;width:51px;height:19px;line-height:17px;">终指<svg class="chev" width="10" height="7" viewBox="0 0 10 7"><path d="M1 1 L5 5 L9 1" fill="none" stroke="#111" stroke-width="2.2"/></svg></div>
<div class="sel" style="left:724px;top:411px;width:70px;height:19px;line-height:17px;">平均值<svg class="chev" width="10" height="7" viewBox="0 0 10 7"><path d="M1 1 L5 5 L9 1" fill="none" stroke="#111" stroke-width="2.2"/></svg></div>
<div class="sel" style="left:801px;top:411px;width:51px;height:19px;line-height:17px;">终指<svg class="chev" width="10" height="7" viewBox="0 0 10 7"><path d="M1 1 L5 5 L9 1" fill="none" stroke="#111" stroke-width="2.2"/></svg></div>
<div class="sel" style="left:936px;top:411px;width:51px;height:19px;line-height:17px;">全场<svg class="chev" width="10" height="7" viewBox="0 0 10 7"><path d="M1 1 L5 5 L9 1" fill="none" stroke="#111" stroke-width="2.2"/></svg></div>
<div class="t" style="left:5px;top:451px;width:80px;height:25px;line-height:25px;color:#fff">芬超</div>
<div class="t" style="left:86px;top:451px;width:78px;height:25px;line-height:25px;">24-07-21</div>
<div class="t" style="left:165px;top:451px;width:118px;height:25px;line-height:25px;"><span class="one"><i>1</i></span><span class="g"><span class="c">玛丽港</span></span></div>
<div class="t" style="left:284px;top:451px;width:92px;height:25px;line-height:25px;"><span class="r">0-4</span>(0-0)</div>
<div class="t" style="left:377px;top:451px;width:40px;height:25px;line-height:25px;">2-10</div>
<div class="t" style="left:418px;top:451px;width:76px;height:25px;line-height:25px;"><span class="c">塞那乔其</span></div>
<div class="t" style="left:495px;top:451px;width:49px;height:25px;line-height:25px;">0.84</div>
<div class="t" style="left:545px;top:451px;width:86px;height:25px;line-height:25px;"><span class="c">受半</span>/<span class="c">一</span></div>
<div class="t" style="left:632px;top:451px;width:53px;height:25px;line-height:25px;">1.06</div>
<div class="t" style="left:686px;top:451px;width:67px;height:25px;line-height:25px;">4.32</div>
<div class="t" style="left:754px;top:451px;width:67px;height:25px;line-height:25px;">3.63</div>
<div class="t" style="left:822px;top:451px;width:69px;height:25px;line-height:25px;">1.74</div>
<div class="t" style="left:892px;top:451px;width:39px;height:25px;line-height:25px;"><b1><span class="c">负</span></b1></div>
<div class="t" style="left:932px;top:451px;width:39px;height:25px;line-height:25px;"><b1><span class="c">输</span></b1></div>
<div class="t" style="left:972px;top:451px;width:59px;height:25px;line-height:25px;"><r1><span class="c">大</span></r1></div>
<div class="t" style="left:5px;top:477px;width:80px;height:25px;line-height:25px;color:#fff">芬超</div>
<div class="t" style="left:86px;top:477px;width:78px;height:25px;line-height:25px;">24-07-07</div>
<div class="t" style="left:165px;top:477px;width:118px;height:25px;line-height:25px;"><span class="g"><span class="c">玛丽港</span></span></div>
<div class="t" style="left:284px;top:477px;width:92px;height:25px;line-height:25px;"><span class="r">0-3</span>(0-2)</div>
<div class="t" style="left:377px;top:477px;width:40px;height:25px;line-height:25px;">4-2</div>
<div class="t" style="left:418px;top:477px;width:76px;height:25px;line-height:25px;"><span class="c">哈卡</span></div>
<div class="t" style="left:495px;top:477px;width:49px;height:25px;line-height:25px;">0.94</div>
<div class="t" style="left:545px;top:477px;width:86px;height:25px;line-height:25px;"><span class="c">平手</span></div>
<div class="t" style="left:632px;top:477px;width:53px;height:25px;line-height:25px;">0.95</div>
<div class="t" style="left:686px;top:477px;width:67px;height:25px;line-height:25px;">2.48</div>
<div class="t" style="left:754px;top:477px;width:67px;height:25px;line-height:25px;">3.19</div>
<div class="t" style="left:822px;top:477px;width:69px;height:25px;line-height:25px;">2.72</div>
<div class="t" style="left:892px;top:477px;width:39px;height:25px;line-height:25px;"><b1><span class="c">负</span></b1></div>
<div class="t" style="left:932px;top:477px;width:39px;height:25px;line-height:25px;"><b1><span class="c">输</span></b1></div>
<div class="t" style="left:972px;top:477px;width:59px;height:25px;line-height:25px;"><r1><span class="c">大</span></r1></div>
<div class="t" style="left:5px;top:503px;width:80px;height:25px;line-height:25px;color:#fff">芬超</div>
<div class="t" style="left:86px;top:503px;width:78px;height:25px;line-height:25px;">24-06-30</div>
<div class="t" style="left:165px;top:503px;width:118px;height:25px;line-height:25px;"><span class="g"><span class="c">玛丽港</span></span></div>
<div class="t" style="left:284px;top:503px;width:92px;height:25px;line-height:25px;"><span class="r">1-2</span>(1-1)</div>
<div class="t" style="left:377px;top:503px;width:40px;height:25px;line-height:25px;">5-6</div>
<div class="t" style="left:418px;top:503px;width:76px;height:25px;line-height:25px;"><span class="c">赫尔辛基</span></div>
<div class="t" style="left:495px;top:503px;width:49px;height:25px;line-height:25px;">0.89</div>
<div class="t" style="left:545px;top:503px;width:86px;height:25px;line-height:25px;"><span class="c">受半</span>/<span class="c">一</span></div>
<div class="t" style="left:632px;top:503px;width:53px;height:25px;line-height:25px;">0.99</div>
<div class="t" style="left:686px;top:503px;width:67px;height:25px;line-height:25px;">4.82</div>
<div class="t" style="left:754px;top:503px;width:67px;height:25px;line-height:25px;">3.58</div>
<div class="t" style="left:822px;top:503px;width:69px;height:25px;line-height:25px;">1.68</div>
<div class="t" style="left:892px;top:503px;width:39px;height:25px;line-height:25px;"><b1><span class="c">负</span></b1></div>
<div class="t" style="left:932px;top:503px;width:39px;height:25px;line-height:25px;"><b1><span class="c">输</span></b1></div>
<div class="t" style="left:972px;top:503px;width:59px;height:25px;line-height:25px;"><r1><span class="c">大</span></r1></div>
<div class="t" style="left:5px;top:529px;width:80px;height:25px;line-height:25px;color:#fff">芬超</div>
<div class="t" style="left:86px;top:529px;width:78px;height:25px;line-height:25px;">24-06-20</div>
<div class="t" style="left:165px;top:529px;width:118px;height:25px;line-height:25px;"><span class="one"><i>1</i></span>EIF<span class="c">埃克纳斯</span></div>
<div class="t" style="left:284px;top:529px;width:92px;height:25px;line-height:25px;"><span class="r">1-2</span>(1-1)</div>
<div class="t" style="left:377px;top:529px;width:40px;height:25px;line-height:25px;">2-7</div>
<div class="t" style="left:418px;top:529px;width:76px;height:25px;line-height:25px;"><span class="g"><span class="c">玛丽港</span></span></div>
<div class="t" style="left:495px;top:529px;width:49px;height:25px;line-height:25px;">1.08</div>
<div class="t" style="left:545px;top:529px;width:86px;height:25px;line-height:25px;"><span class="c">平手</span></div>
<div class="t" style="left:632px;top:529px;width:53px;height:25px;line-height:25px;">0.80</div>
<div class="t" style="left:686px;top:529px;width:67px;height:25px;line-height:25px;">2.84</div>
<div class="t" style="left:754px;top:529px;width:67px;height:25px;line-height:25px;">3.08</div>
<div class="t" style="left:822px;top:529px;width:69px;height:25px;line-height:25px;">2.46</div>
<div class="t" style="left:892px;top:529px;width:39px;height:25px;line-height:25px;"><r1><span class="c">胜</span></r1></div>
<div class="t" style="left:932px;top:529px;width:39px;height:25px;line-height:25px;"><r1><span class="c">赢</span></r1></div>
<div class="t" style="left:972px;top:529px;width:59px;height:25px;line-height:25px;"><r1><span class="c">大</span></r1></div>
<div class="t" style="left:5px;top:555px;width:80px;height:25px;line-height:25px;color:#fff">芬兰杯</div>
<div class="t" style="left:86px;top:555px;width:78px;height:25px;line-height:25px;">24-06-16</div>
<div class="t" style="left:165px;top:555px;width:118px;height:25px;line-height:25px;"><span class="g"><span class="c">玛丽港</span></span></div>
<div class="t" style="left:284px;top:555px;width:92px;height:25px;line-height:25px;"><span class="r">1-3</span>(0-2)</div>
<div class="t" style="left:377px;top:555px;width:40px;height:25px;line-height:25px;">1-9</div>
<div class="t" style="left:418px;top:555px;width:76px;height:25px;line-height:25px;"><span class="c">古比斯</span></div>
<div class="t" style="left:495px;top:555px;width:49px;height:25px;line-height:25px;">0.79</div>
<div class="t" style="left:545px;top:555px;width:86px;height:25px;line-height:25px;"><span class="c">受一球</span></div>
<div class="t" style="left:632px;top:555px;width:53px;height:25px;line-height:25px;">1.03</div>
<div class="t" style="left:686px;top:555px;width:67px;height:25px;line-height:25px;">5.77</div>
<div class="t" style="left:754px;top:555px;width:67px;height:25px;line-height:25px;">3.93</div>
<div class="t" style="left:822px;top:555px;width:69px;height:25px;line-height:25px;">1.49</div>
<div class="t" style="left:892px;top:555px;width:39px;height:25px;line-height:25px;"><b1><span class="c">负</span></b1></div>
<div class="t" style="left:932px;top:555px;width:39px;height:25px;line-height:25px;"><b1><span class="c">输</span></b1></div>
<div class="t" style="left:972px;top:555px;width:59px;height:25px;line-height:25px;"><r1><span class="c">大</span></r1></div>
<div class="t" style="left:5px;top:581px;width:80px;height:25px;line-height:25px;color:#fff">芬超</div>
<div class="t" style="left:86px;top:581px;width:78px;height:25px;line-height:25px;">24-06-12</div>
<div class="t" style="left:165px;top:581px;width:118px;height:25px;line-height:25px;"><span class="g"><span class="c">玛丽港</span></span></div>
<div class="t" style="left:284px;top:581px;width:92px;height:25px;line-height:25px;"><span class="r">0-0</span>(0-0)</div>
<div class="t" style="left:377px;top:581px;width:40px;height:25px;line-height:25px;">7-4</div>
<div class="t" style="left:418px;top:581px;width:76px;height:25px;line-height:25px;">VPS<span class="c">瓦萨</span></div>
<div class="t" style="left:495px;top:581px;width:49px;height:25px;line-height:25px;">0.87</div>
<div class="t" style="left:545px;top:581px;width:86px;height:25px;line-height:25px;"><span class="c">受半球</span></div>
<div class="t" style="left:632px;top:581px;width:53px;height:25px;line-height:25px;">1.01</div>
<div class="t" style="left:686px;top:581px;width:67px;height:25px;line-height:25px;">3.71</div>
<div class="t" style="left:754px;top:581px;width:67px;height:25px;line-height:25px;">3.40</div>
<div class="t" style="left:822px;top:581px;width:69px;height:25px;line-height:25px;">1.93</div>
<div class="t" style="left:892px;top:581px;width:39px;height:25px;line-height:25px;"><g1><span class="c">平</span></g1></div>
<div class="t" style="left:932px;top:581px;width:39px;height:25px;line-height:25px;"><r1><span class="c">赢</span></r1></div>
<div class="t" style="left:972px;top:581px;width:59px;height:25px;line-height:25px;"><b1><span class="c">小</span></b1></div>
<div class="t" style="left:5px;top:607px;width:80px;height:25px;line-height:25px;color:#fff">芬超</div>
<div class="t" style="left:86px;top:607px;width:78px;height:25px;line-height:25px;">24-06-07</div>
<div class="t" style="left:165px;top:607px;width:118px;height:25px;line-height:25px;"><span class="c">哈卡</span></div>
<div class="t" style="left:284px;top:607px;width:92px;height:25px;line-height:25px;"><span class="r">2-0</span>(1-0)</div>
<div class="t" style="left:377px;top:607px;width:40px;height:25px;line-height:25px;">3-5</div>
<div class="t" style="left:418px;top:607px;width:76px;height:25px;line-height:25px;"><span class="g"><span class="c">玛丽港</span></span></div>
<div class="t" style="left:495px;top:607px;width:49px;height:25px;line-height:25px;">1.02</div>
<div class="t" style="left:545px;top:607px;width:86px;height:25px;line-height:25px;"><span class="c">半</span>/<span class="c">一</span></div>
<div class="t" style="left:632px;top:607px;width:53px;height:25px;line-height:25px;">0.86</div>
<div class="t" style="left:686px;top:607px;width:67px;height:25px;line-height:25px;">1.73</div>
<div class="t" style="left:754px;top:607px;width:67px;height:25px;line-height:25px;">3.69</div>
<div class="t" style="left:822px;top:607px;width:69px;height:25px;line-height:25px;">4.32</div>
<div class="t" style="left:892px;top:607px;width:39px;height:25px;line-height:25px;"><b1><span class="c">负</span></b1></div>
<div class="t" style="left:932px;top:607px;width:39px;height:25px;line-height:25px;"><b1><span class="c">输</span></b1></div>
<div class="t" style="left:972px;top:607px;width:59px;height:25px;line-height:25px;"><b1><span class="c">小</span></b1></div>
<div class="t" style="left:5px;top:633px;width:80px;height:25px;line-height:25px;color:#fff">芬超</div>
<div class="t" style="left:86px;top:633px;width:78px;height:25px;line-height:25px;">24-05-31</div>
<div class="t" style="left:165px;top:633px;width:118px;height:25px;line-height:25px;"><span class="c">塞那乔其</span></div>
<div class="t" style="left:284px;top:633px;width:92px;height:25px;line-height:25px;"><span class="r">0-2</span>(0-0)</div>
<div class="t" style="left:377px;top:633px;width:40px;height:25px;line-height:25px;">9-2</div>
<div class="t" style="left:418px;top:633px;width:76px;height:25px;line-height:25px;"><span class="g"><span class="c">玛丽港</span></span></div>
<div class="t" style="left:495px;top:633px;width:49px;height:25px;line-height:25px;">0.94</div>
<div class="t" style="left:545px;top:633px;width:86px;height:25px;line-height:25px;"><span class="c">一球</span></div>
<div class="t" style="left:632px;top:633px;width:53px;height:25px;line-height:25px;">0.93</div>
<div class="t" style="left:686px;top:633px;width:67px;height:25px;line-height:25px;">1.48</div>
<div class="t" style="left:754px;top:633px;width:67px;height:25px;line-height:25px;">4.21</div>
<div class="t" style="left:822px;top:633px;width:69px;height:25px;line-height:25px;">5.95</div>
<div class="t" style="left:892px;top:633px;width:39px;height:25px;line-height:25px;"><r1><span class="c">胜</span></r1></div>
<div class="t" style="left:932px;top:633px;width:39px;height:25px;line-height:25px;"><r1><span class="c">赢</span></r1></div>
<div class="t" style="left:972px;top:633px;width:59px;height:25px;line-height:25px;"><b1><span class="c">小</span></b1></div>
<div class="t" style="left:5px;top:659px;width:80px;height:25px;line-height:25px;color:#fff">芬超</div>
<div class="t" style="left:86px;top:659px;width:78px;height:25px;line-height:25px;">24-05-26</div>
<div class="t" style="left:165px;top:659px;width:118px;height:25px;line-height:25px;"><span class="g"><span class="c">玛丽港</span></span></div>
<div class="t" style="left:284px;top:659px;width:92px;height:25px;line-height:25px;"><span class="r">1-1</span>(1-1)</div>
<div class="t" style="left:377px;top:659px;width:40px;height:25px;line-height:25px;">3-8</div>
<div class="t" style="left:418px;top:659px;width:76px;height:25px;line-height:25px;"><span class="c">格尼斯坦</span></div>
<div class="t" style="left:495px;top:659px;width:49px;height:25px;line-height:25px;">0.80</div>
<div class="t" style="left:545px;top:659px;width:86px;height:25px;line-height:25px;"><span class="c">平手</span></div>
<div class="t" style="left:632px;top:659px;width:53px;height:25px;line-height:25px;">1.08</div>
<div class="t" style="left:686px;top:659px;width:67px;height:25px;line-height:25px;">2.37</div>
<div class="t" style="left:754px;top:659px;width:67px;height:25px;line-height:25px;">3.19</div>
<div class="t" style="left:822px;top:659px;width:69px;height:25px;line-height:25px;">2.87</div>
<div class="t" style="left:892px;top:659px;width:39px;height:25px;line-height:25px;"><g1><span class="c">平</span></g1></div>
<div class="t" style="left:932px;top:659px;width:39px;height:25px;line-height:25px;"><g1><span class="c">走</span></g1></div>
<div class="t" style="left:972px;top:659px;width:59px;height:25px;line-height:25px;"><b1><span class="c">小</span></b1></div>
<div class="t" style="left:5px;top:685px;width:80px;height:25px;line-height:25px;color:#fff">芬超</div>
<div class="t" style="left:86px;top:685px;width:78px;height:25px;line-height:25px;">24-05-17</div>
<div class="t" style="left:165px;top:685px;width:118px;height:25px;line-height:25px;"><span class="c">奥卢</span></div>
<div class="t" style="left:284px;top:685px;width:92px;height:25px;line-height:25px;"><span class="r">1-1</span>(1-0)</div>
<div class="t" style="left:377px;top:685px;width:40px;height:25px;line-height:25px;">4-5</div>
<div class="t" style="left:418px;top:685px;width:76px;height:25px;line-height:25px;"><span class="g"><span class="c">玛丽港</span></span></div>
<div class="t" style="left:495px;top:685px;width:49px;height:25px;line-height:25px;">1.09</div>
<div class="t" style="left:545px;top:685px;width:86px;height:25px;line-height:25px;"><span class="c">半球</span></div>
<div class="t" style="left:632px;top:685px;width:53px;height:25px;line-height:25px;">0.79</div>
<div class="t" style="left:686px;top:685px;width:67px;height:25px;line-height:25px;">1.94</div>
<div class="t" style="left:754px;top:685px;width:67px;height:25px;line-height:25px;">3.41</div>
<div class="t" style="left:822px;top:685px;width:69px;height:25px;line-height:25px;">3.65</div>
<div class="t" style="left:892px;top:685px;width:39px;height:25px;line-height:25px;"><g1><span class="c">平</span></g1></div>
<div class="t" style="left:932px;top:685px;width:39px;height:25px;line-height:25px;"><r1><span class="c">赢</span></r1></div>
<div class="t" style="left:972px;top:685px;width:59px;height:25px;line-height:25px;"><b1><span class="c">小</span></b1></div>
<div class="t" style="left:5px;top:711px;width:1026px;height:25px;line-height:25px;letter-spacing:0.2px"><span class="c">近</span><span class="r">10</span><span class="c">场</span>,<span class="c">胜</span>2<span class="c">平</span>3<span class="c">负</span>5, <span class="c">胜率</span>:<span class="r">20%</span> <span class="c">让胜率</span>:<span class="r">40%</span> <span class="c">大率</span>:<span class="r">50%</span> <span class="c">单率</span>:<span class="r">30%</span></div></body></html>
